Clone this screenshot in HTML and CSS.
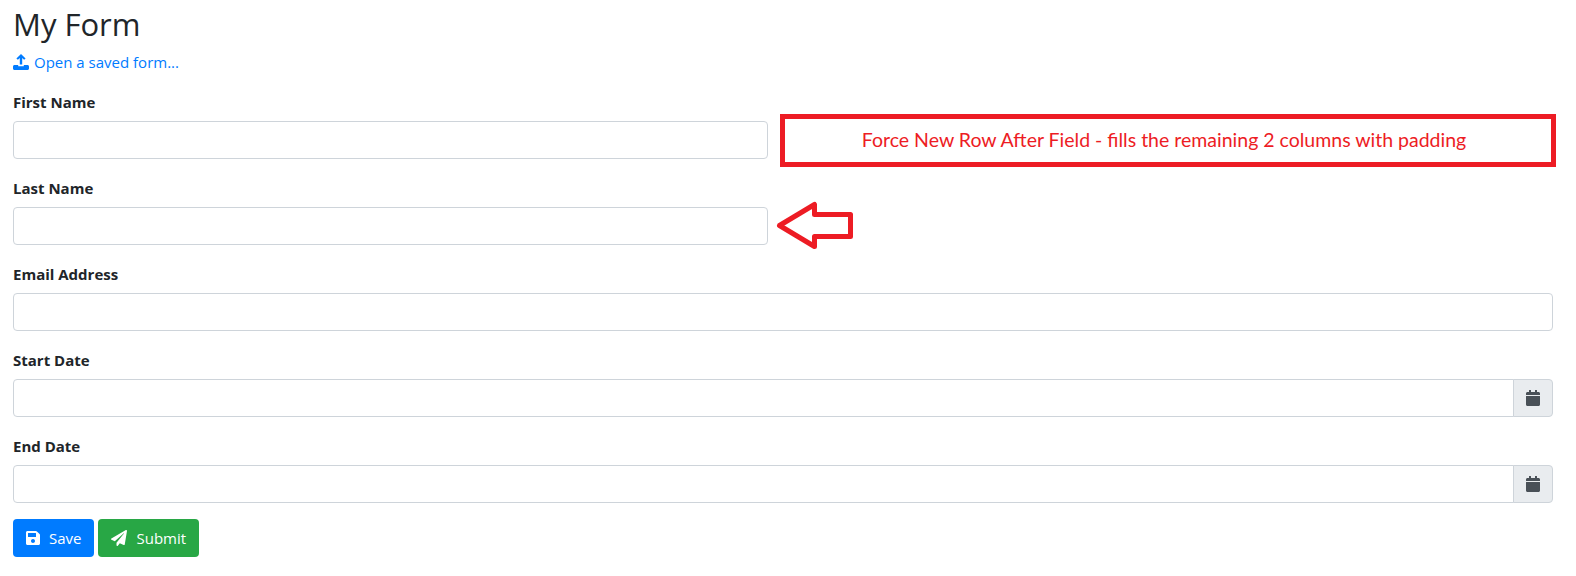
FILE: index.html
```html
<!DOCTYPE html>
<html lang="en">
<head>
  <meta charset="UTF-8">
  <meta name="viewport" content="width=device-width, initial-scale=1.0">
  <title>My Form</title>
  <link rel="stylesheet" href="styles.css">
</head>
<body>
  <h2 class="title">My Form</h2>
  <a class="open-link" href="#">
    <svg class="link-icon" viewBox="0 0 16 16"><path d="M8 0l4.600 4.500-1.500 1.300-1.900-1.900v6.600H6.800V3.900L4.900 5.800 3.400 4.500z"/><path d="M1.500 11h3.700v1.300h5.600V11h3.700c.8 0 1.500.7 1.500 1.500v2c0 .8-.7 1.500-1.500 1.500h-13C.7 16 0 15.300 0 14.500v-2C0 11.700.7 11 1.500 11z"/></svg>
    Open a saved form...
  </a>

  <form class="form">
    <div class="field half">
      <label class="field-label">First Name</label>
      <input class="field-input" type="text">
    </div>
    <div class="field half">
      <label class="field-label">Last Name</label>
      <input class="field-input" type="text">
    </div>
    <div class="field">
      <label class="field-label">Email Address</label>
      <input class="field-input" type="text">
    </div>
    <div class="field">
      <label class="field-label">Start Date</label>
      <div class="input-group">
        <input class="field-input" type="text">
        <span class="addon">
          <svg class="addon-icon" viewBox="0 0 448 512"><path d="M12 192h424c6.600 0 12 5.400 12 12v260c0 26.500-21.500 48-48 48H48c-26.500 0-48-21.500-48-48V204c0-6.600 5.400-12 12-12zm436-44v-36c0-26.500-21.500-48-48-48h-48V12c0-6.600-5.400-12-12-12h-40c-6.600 0-12 5.400-12 12v52H160V12c0-6.600-5.400-12-12-12h-40c-6.600 0-12 5.400-12 12v52H48C21.500 64 0 85.500 0 112v36c0 6.600 5.400 12 12 12h424c6.600 0 12-5.400 12-12z"/></svg>
        </span>
      </div>
    </div>
    <div class="field">
      <label class="field-label">End Date</label>
      <div class="input-group">
        <input class="field-input" type="text">
        <span class="addon">
          <svg class="addon-icon" viewBox="0 0 448 512"><path d="M12 192h424c6.600 0 12 5.400 12 12v260c0 26.500-21.500 48-48 48H48c-26.500 0-48-21.500-48-48V204c0-6.600 5.400-12 12-12zm436-44v-36c0-26.500-21.500-48-48-48h-48V12c0-6.600-5.400-12-12-12h-40c-6.600 0-12 5.400-12 12v52H160V12c0-6.600-5.400-12-12-12h-40c-6.600 0-12 5.400-12 12v52H48C21.500 64 0 85.500 0 112v36c0 6.600 5.400 12 12 12h424c6.600 0 12-5.400 12-12z"/></svg>
        </span>
      </div>
    </div>
    <div class="actions">
      <button class="btn btn-save" type="button">
        <svg class="btn-icon" viewBox="0 0 448 512"><path d="M433.941 129.941l-83.882-83.882A48 48 0 0 0 316.118 32H48C21.490 32 0 53.490 0 80v352c0 26.510 21.490 48 48 48h352c26.510 0 48-21.490 48-48V163.882a48 48 0 0 0-14.059-33.941zM224 416c-35.346 0-64-28.654-64-64 0-35.346 28.654-64 64-64s64 28.654 64 64c0 35.346-28.654 64-64 64zm96-304.520V212c0 6.627-5.373 12-12 12H76c-6.627 0-12-5.373-12-12V108c0-6.627 5.373-12 12-12h228.520c3.183 0 6.235 1.264 8.485 3.515l3.480 3.480A11.996 11.996 0 0 1 320 111.480z"/></svg>
        Save
      </button>
      <button class="btn btn-submit" type="button">
        <svg class="btn-icon plane" viewBox="0 0 512 512"><path d="M476 3.200L12.500 270.600c-18.100 10.400-15.800 35.600 2.200 43.200L121 358.400l287.300-253.200c5.500-4.900 13.300 2.600 8.600 8.300L176 407v80.500c0 23.600 28.500 32.900 42.500 15.800L282 426l124.600 52.200c14.200 6 30.400-2.900 33-18.200l72-432C515 7.800 493.300-6.800 476 3.200z"/></svg>
        Submit
      </button>
    </div>
  </form>

  <!-- annotations drawn over the screenshot -->
  <div class="note">Force New Row After Field - fills the remaining 2 columns with padding</div>
  <svg class="note-arrow" viewBox="0 0 80 52"><path d="M3.500 25.500L38.500 4.500V14.500H74.500V36.500H38.500V46.500Z"/></svg>
</body>
</html>
```

FILE: styles.css
```css
body {
  margin: 0;
  padding: 6px 23px 0 13px;
  font-family: "Open Sans", "Noto Sans", sans-serif;
  font-size: 15px;
  line-height: 24px;
  color: #212529;
  background-color: #fff;
}

.title {
  margin: 0 0 8px;
  font-size: 31px;
  font-weight: 400;
  line-height: 36px;
}

.open-link {
  display: flex;
  align-items: center;
  gap: 5px;
  margin-bottom: 15px;
  color: #007bff;
  text-decoration: none;
}

.link-icon {
  width: 16px;
  height: 16px;
  fill: #007bff;
}

.field {
  margin-bottom: 16px;
}

.half {
  width: 755px;
}

.field-label {
  display: block;
  margin-bottom: 6px;
  font-weight: 700;
  line-height: 26px;
}

.field-input {
  display: block;
  box-sizing: border-box;
  width: 100%;
  height: 38px;
  padding: 6px 12px;
  border: 1px solid #ced4da;
  border-radius: 4px;
  background-color: #fff;
}

.input-group {
  display: flex;
}

.input-group .field-input {
  flex: 1;
  border-radius: 4px 0 0 4px;
}

.addon {
  display: flex;
  align-items: center;
  justify-content: center;
  box-sizing: border-box;
  width: 40px;
  height: 38px;
  margin-left: -1px;
  border: 1px solid #ced4da;
  border-radius: 0 4px 4px 0;
  background-color: #e9ecef;
}

.addon-icon {
  width: 14px;
  height: 16px;
  fill: #495057;
}

.actions {
  display: flex;
  gap: 4px;
}

.btn {
  display: flex;
  align-items: center;
  gap: 9px;
  height: 38px;
  padding: 0 12px;
  border: 1px solid transparent;
  border-radius: 4px;
  font-family: inherit;
  font-size: 15px;
  color: #fff;
}

.btn-save {
  background-color: #007bff;
}

.btn-submit {
  background-color: #28a745;
}

.btn-icon {
  width: 14px;
  height: 16px;
  fill: #fff;
}

.btn-icon.plane {
  width: 16px;
}

.note {
  position: absolute;
  left: 780px;
  top: 114px;
  box-sizing: border-box;
  width: 776px;
  height: 53px;
  padding-right: 8px;
  border: 5px solid #ed1c24;
  font-family: Lato, sans-serif;
  font-size: 19.5px;
  line-height: 41px;
  text-align: center;
  color: #ed1c24;
}

.note-arrow {
  position: absolute;
  left: 776px;
  top: 200px;
  width: 80px;
  height: 52px;
  fill: none;
  stroke: #ed1c24;
  stroke-width: 5;
  stroke-linejoin: round;
}
```
